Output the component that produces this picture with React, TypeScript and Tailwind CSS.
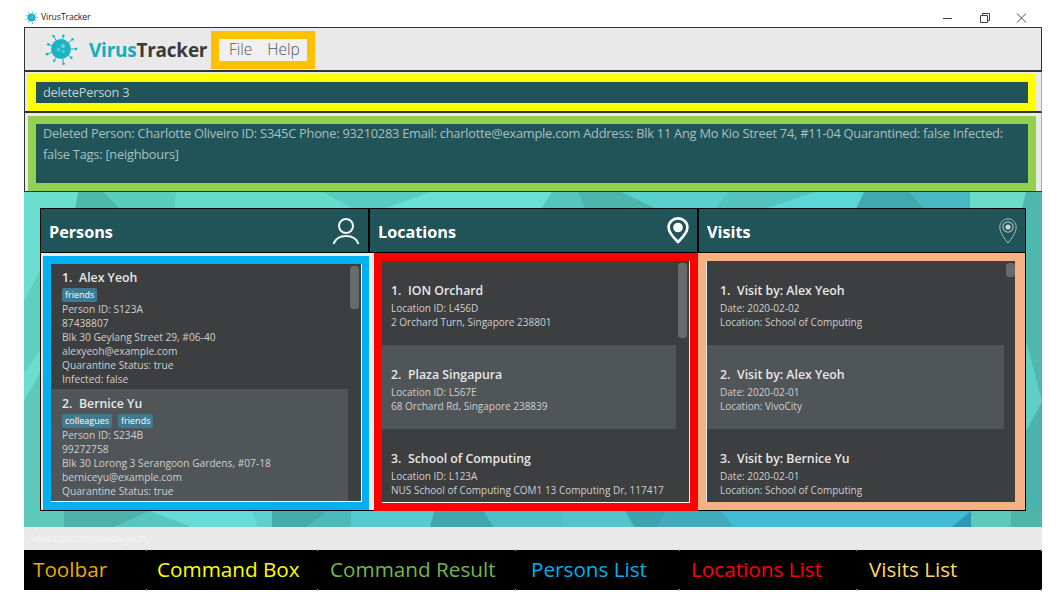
const FONT = "font-['Open_Sans','Noto_Sans',sans-serif]";

type Facet = [string, string];

const FACETS: Facet[] = [
  ["75,208 78,191 104,191 121,208", "#4fb8ac"],
  ["104,191 176,191 175,208 121,208", "#5acdbd"],
  ["176,191 323,191 353,208 175,208", "#66dcca"],
  ["323,191 431,191 384,208 353,208", "#5accc4"],
  ["431,191 552,191 541,208 384,208", "#68e0d6"],
  ["552,191 578,191 585,208 541,208", "#55c5bd"],
  ["578,191 622,191 657,208 585,208", "#4db5ae"],
  ["622,191 728,191 715,208 657,208", "#5ad0cc"],
  ["728,191 816,191 764,208 715,208", "#55c3bf"],
  ["816,191 864,191 856,208 764,208", "#5cd6d6"],
  ["864,191 910,191 925,208 856,208", "#41a9ae"],
  ["910,191 970,191 970,208 925,208", "#4ab8c3"],
  ["970,191 1026,191 1022,208 970,208", "#6adcc8"],
  ["1026,191 1042,191 1042,400 1026,400 1022,208", "#4eb8ae"],
  ["1026,340 1042,400 1026,430", "#5ecfc4"],
  ["1026,430 1042,400 1042,526 1026,526", "#49b3ac"],
  ["24,191 75,191 75,208 40,208 40,526 24,526", "#6adfcf"],
  ["24,300 40,270 40,350 24,372", "#5fd0c0"],
  ["24,400 40,372 40,526 24,526", "#5cc9bb"],
  ["40,510 64,510 64,526 40,526", "#5cc9bb"],
  ["64,510 150,510 115,526 64,526", "#4eb2aa"],
  ["150,510 192,526 115,526", "#56c6c0"],
  ["150,510 252,510 258,526 192,526", "#65dcd9"],
  ["252,510 272,510 272,526 258,526", "#5bd0cf"],
  ["272,510 328,510 307,526 272,526", "#45acae"],
  ["328,510 351,510 351,526 307,526", "#4cb9bb"],
  ["351,510 434,510 430,526 351,526", "#55cad0"],
  ["434,510 484,510 494,526 430,526", "#3fa7b0"],
  ["484,510 562,510 562,526 494,526", "#4dbfc8"],
  ["562,510 625,510 634,526 562,526", "#53c4cc"],
  ["625,510 666,510 658,526 634,526", "#3ca4b1"],
  ["666,510 722,510 734,526 658,526", "#3fabbc"],
  ["722,510 971,510 971,526 734,526", "#42bcd6"],
  ["971,510 952,526 971,526", "#2f98b8"],
  ["971,510 1011,510 1011,526 971,526", "#5cc9bb"],
  ["1011,510 1042,510 1042,526 1011,526", "#4db5aa"],
];

const PERSONS = [
  {
    name: "Alex Yeoh",
    tags: ["friends"],
    lines: ["Person ID: S123A", "87438807", "Blk 30 Geylang Street 29, #06-40", "alexyeoh@example.com", "Quarantine Status: true", "Infected: false"],
  },
  {
    name: "Bernice Yu",
    tags: ["colleagues", "friends"],
    lines: ["Person ID: S234B", "99272758", "Blk 30 Lorong 3 Serangoon Gardens, #07-18", "berniceyu@example.com", "Quarantine Status: true", "Infected: false"],
  },
];

const LOCATIONS = [
  { title: "ION Orchard", lines: ["Location ID: L456D", "2 Orchard Turn, Singapore 238801"] },
  { title: "Plaza Singapura", lines: ["Location ID: L567E", "68 Orchard Rd, Singapore 238839"] },
  { title: "School of Computing", lines: ["Location ID: L123A", "NUS School of Computing COM1 13 Computing Dr, 117417"] },
];

const VISITS = [
  { title: "Visit by: Alex Yeoh", lines: ["Date: 2020-02-02", "Location: School of Computing"] },
  { title: "Visit by: Alex Yeoh", lines: ["Date: 2020-02-01", "Location: VivoCity"] },
  { title: "Visit by: Bernice Yu", lines: ["Date: 2020-02-01", "Location: School of Computing"] },
];

const LEGEND = [
  { label: "Toolbar", width: "w-[123px]", pad: "pl-[9px]", color: "text-[#f0a800]" },
  { label: "Command Box", width: "w-[171px]", pad: "pl-[10px]", color: "text-[#ffff00]" },
  { label: "Command Result", width: "w-[198px]", pad: "pl-[12px]", color: "text-[#72b84a]" },
  { label: "Persons List", width: "w-[164px]", pad: "pl-[15px]", color: "text-[#00b0f0]" },
  { label: "Locations List", width: "w-[177px]", pad: "pl-[11px]", color: "text-[#ff0000]" },
  { label: "Visits List", width: "w-[185px]", pad: "pl-[12px]", color: "text-[#ffd966]" },
];

function Virus({ size }: { size: number }) {
  const spikes = [0, 40, 80, 120, 160, 200, 240, 280, 320];
  return (
    <svg width={size} height={size} viewBox="0 0 32 32">
      {spikes.map((deg, i) => {
        const r = (deg * Math.PI) / 180;
        const far = i % 2 === 0 ? 15 : 13.5;
        return (
          <g key={deg}>
            <line x1={16 + 9 * Math.cos(r)} y1={16 + 9 * Math.sin(r)} x2={16 + far * Math.cos(r)} y2={16 + far * Math.sin(r)} stroke="#1fb4c4" strokeWidth="1" />
            <circle cx={16 + far * Math.cos(r)} cy={16 + far * Math.sin(r)} r="1.3" fill="#1fb4c4" />
          </g>
        );
      })}
      <circle cx="16" cy="16" r="10" fill="#1db3c3" />
      <circle cx="18" cy="13" r="2" fill="#6fd3dc" />
      <circle cx="13.5" cy="16.5" r="1.5" fill="#6fd3dc" />
      <circle cx="18.5" cy="18.5" r="1.3" fill="#6fd3dc" />
    </svg>
  );
}

function PersonIcon() {
  return (
    <svg width="28" height="28" viewBox="0 0 28 28" fill="none" stroke="#f2f5f5" strokeWidth="2">
      <circle cx="14" cy="9" r="7" />
      <path d="M1.5 27c2-5.5 6.5-8 12.5-8s10.500 2.500 12.500 8" />
    </svg>
  );
}

function PinIcon() {
  return (
    <svg width="22" height="27" viewBox="0 0 22 27">
      <path fill="none" stroke="#ffffff" strokeWidth="2.600" d="M11 25C7 21 1.600 16 1.600 10.500C1.600 5.400 5.800 1.400 11 1.400S20.400 5.400 20.400 10.500C20.400 16 15 21 11 25Z" />
      <circle cx="11" cy="10.500" r="4.800" fill="#ffffff" />
    </svg>
  );
}

function VisitIcon() {
  return (
    <svg width="18" height="26" viewBox="0 0 18 26" fill="none" stroke="#a9bcbd" strokeWidth="1">
      <path d="M9 25C5 20 0.800 14.500 0.800 9.200C0.800 4.500 4.500 0.800 9 0.800S17.200 4.500 17.200 9.200C17.200 14.500 13 20 9 25Z" />
      <circle cx="9" cy="9" r="5.200" strokeWidth="1.200" />
      <circle cx="9" cy="9" r="2.600" fill="#c6d3d3" stroke="none" />
    </svg>
  );
}

function Scrollbar({ thumb, width = "w-[13px]" }: { thumb: string; width?: string }) {
  return (
    <div className={`shrink-0 bg-[#3c3e40] pl-[2px] pt-[2px] ${width}`}>
      <div className={`w-[9px] rounded-[3px] bg-[#68696b] ${thumb}`} />
    </div>
  );
}

function Header({ title, children }: { title: string; children: React.ReactNode }) {
  return (
    <div className="flex h-[45px] items-center justify-between border border-black bg-[#205458] pl-[8px] pr-[8px]">
      <span className="mt-[3px] text-[16.2px] font-bold text-white">{title}</span>
      {children}
    </div>
  );
}

function Title({ n, text }: { n: number; text: string }) {
  return (
    <div className="flex h-[18px] items-center whitespace-nowrap text-[12.3px] font-semibold leading-[18px] text-[#e8e8e8]">
      <span className="w-[17px]">{n}.</span>
      <span>{text}</span>
    </div>
  );
}

function Details({ lines, size }: { lines: string[]; size: string }) {
  return (
    <div>
      {lines.map((line) => (
        <div key={line} className={`h-[14px] whitespace-nowrap leading-[14px] text-[#cfcfcf] ${size}`}>
          {line}
        </div>
      ))}
    </div>
  );
}

function SimpleList({
  items,
  pad,
  thumb,
  edge,
  barWidth,
}: {
  items: { title: string; lines: string[] }[];
  pad: string;
  thumb: string;
  edge: string;
  barWidth?: string;
}) {
  return (
    <div className={`flex h-full overflow-hidden bg-[#3c3e40] ${edge}`}>
      <div className="min-w-0 flex-1">
        {items.map((item, i) => (
          <div key={item.lines[0] + i} className={`h-[84px] pt-[21px] ${pad} ${i % 2 === 1 ? "bg-[#505558]" : "bg-[#3c3e40]"}`}>
            <Title n={i + 1} text={item.title} />
            <div className="mt-[1px]">
              <Details lines={item.lines} size="text-[10px]" />
            </div>
          </div>
        ))}
      </div>
      <Scrollbar thumb={thumb} width={barWidth} />
    </div>
  );
}

export default function App() {
  return (
    <div className={`flex h-[600px] w-[1056px] flex-col overflow-hidden bg-white ${FONT}`}>
      {/* Title bar */}
      <div className="flex h-[27px] shrink-0 items-center pl-[25px] pr-[29px] pt-[8px]">
        <Virus size={13} />
        <span className="ml-[3px] mt-[1px] text-[8.7px] tracking-[-0.1px] text-[#222]">VirusTracker</span>
        <svg className="ml-auto" width="84" height="10" viewBox="0 0 84 10" fill="none" stroke="#444" strokeWidth="1">
          <path d="M0 5.500H9" />
          <path d="M37.500 2.500H44.500V9.500H37.500ZM39.500 2.500V0.500H46.500V7.500H44.500" />
          <path d="M74 0.500L83 9.500M83 0.500L74 9.500" />
        </svg>
      </div>

      <div className="ml-[24px] flex w-[1018px] shrink-0 flex-col">
        {/* Toolbar */}
        <div className="flex h-[45px] items-center border border-b-2 border-[#333] bg-[#e9e9e9] pl-[20px]">
          <Virus size={32} />
          <span className="ml-[12px] mt-[2px] w-[118px] whitespace-nowrap text-[19px] font-bold tracking-[-0.25px]">
            <span className="text-[#14aebf]">Virus</span>
            <span className="text-[#3a3a3a]">Tracker</span>
          </span>
          <div className="ml-[4px] mt-[1px] flex h-[38px] w-[104px] items-center gap-[15px] border-[8px] border-[#ffc000] bg-[#f0f0f0] pl-[10px] text-[15.5px] font-light text-[#555]">
            <span>File</span>
            <span>Help</span>
          </div>
        </div>

        {/* Command box */}
        <div className="h-[41px] border-x border-b-2 border-[#333] border-r-[#aaa] bg-[#e9e9e9] pl-[3px] pr-[5px] pt-[2px]">
          <div className="flex h-[37px] items-center border-[8px] border-[#ffff00] bg-[#205458] pl-[7px] text-[12.8px] tracking-[-0.23px] text-[#c3d2d2]">
            deletePerson 3
          </div>
        </div>

        {/* Command result */}
        <div className="h-[78px] border-x border-[#333] border-r-[#aaa] bg-[#e9e9e9] pl-[3px] pr-[5px] pt-[3px]">
          <div className="h-[75px] border-[8px] border-[#92d050] bg-[#205458] px-[7px] text-[12.8px] leading-[21px] tracking-[-0.23px] text-[#a9c0c0]">
            <div className="-mt-[1px]">
              Deleted Person: Charlotte Oliveiro ID: S345C Phone: 93210283 Email: charlotte@example.com Address: Blk 11 Ang Mo Kio Street 74, #11-04 Quarantined: false Infected: false Tags: [neighbours]
            </div>
          </div>
        </div>

        {/* Panels */}
        <div className="relative h-[335px] border-t border-[#333] bg-[#6ae0d2]">
          <svg className="absolute inset-0" width="1018" height="335" viewBox="24 191 1018 335">
            {FACETS.map(([points, fill]) => (
              <polygon key={points} points={points} fill={fill} />
            ))}
          </svg>

          <div className="relative flex pl-[16px] pt-[16px]">
            <div className="w-[329px]">
              <Header title="Persons">
                <PersonIcon />
              </Header>
              <div className="h-[258px] border-l border-b border-l-black border-b-black bg-[#e9e9e9] pl-[2px] pt-[3px]">
                <div className="h-[254px] w-[327px] border-[8px] border-[#00b0f0]">
                  <div className="flex h-full overflow-hidden border-r border-b border-white bg-[#3c3e40]">
                    <div className="min-w-0 flex-1">
                      {PERSONS.map((p, i) => (
                        <div key={p.name} className={`h-[125px] pl-[11px] ${i % 2 === 1 ? "bg-[#505558] pt-[6px]" : "bg-[#3c3e40] pt-[5px]"}`}>
                          <Title n={i + 1} text={p.name} />
                          <div className="mt-[1px] flex gap-[6px]">
                            {p.tags.map((tag) => (
                              <span key={tag} className="flex h-[14px] items-center rounded-[2px] bg-[#3e7b91] px-[3px] text-[9px] text-white">
                                {tag}
                              </span>
                            ))}
                          </div>
                          <Details lines={p.lines} size="text-[10.2px]" />
                        </div>
                      ))}
                    </div>
                    <Scrollbar thumb="h-[43px]" />
                  </div>
                </div>
              </div>
            </div>

            <div className="w-[329px]">
              <Header title="Locations">
                <PinIcon />
              </Header>
              <div className="h-[258px] border-b border-black bg-[#e9e9e9] pl-[5px]">
                <div className="h-[258px] w-[324px] border-[8px] border-[#ff0000]">
                  <SimpleList items={LOCATIONS} pad="pl-[9px]" thumb="h-[75px]" edge="border-r border-b border-white" />
                </div>
              </div>
            </div>

            <div className="w-[328px]">
              <Header title="Visits">
                <VisitIcon />
              </Header>
              <div className="h-[258px] border-r border-b border-black bg-[#e9e9e9]">
                <div className="h-[257px] w-[327px] border-[8px] border-r-[10px] border-[#f4b183] pl-[1px]">
                  <SimpleList items={VISITS} pad="pl-[13px]" thumb="h-[14px]" edge="" barWidth="w-[11px]" />
                </div>
              </div>
            </div>
          </div>
        </div>

        {/* Status bar */}
        <div className="flex h-[24px] items-center bg-[#e9e9e9] pl-[3px] text-[11.5px] font-light text-[#f8f8f8]">
          .\data\personbook.json
        </div>
      </div>

      {/* Annotation legend */}
      <div className="ml-[24px] flex h-[40px] w-[1018px] shrink-0 bg-black">
        {LEGEND.map((cell) => (
          <div key={cell.label} className={`relative flex items-center whitespace-nowrap text-[20.7px] ${cell.width} ${cell.pad} ${cell.color}`}>
            {cell.label}
            <span className="absolute -top-[1px] right-0 h-[2px] w-[1px] bg-[#aaa]" />
            <span className="absolute -bottom-[1px] right-0 h-[2px] w-[1px] bg-[#aaa]" />
          </div>
        ))}
      </div>
    </div>
  );
}
